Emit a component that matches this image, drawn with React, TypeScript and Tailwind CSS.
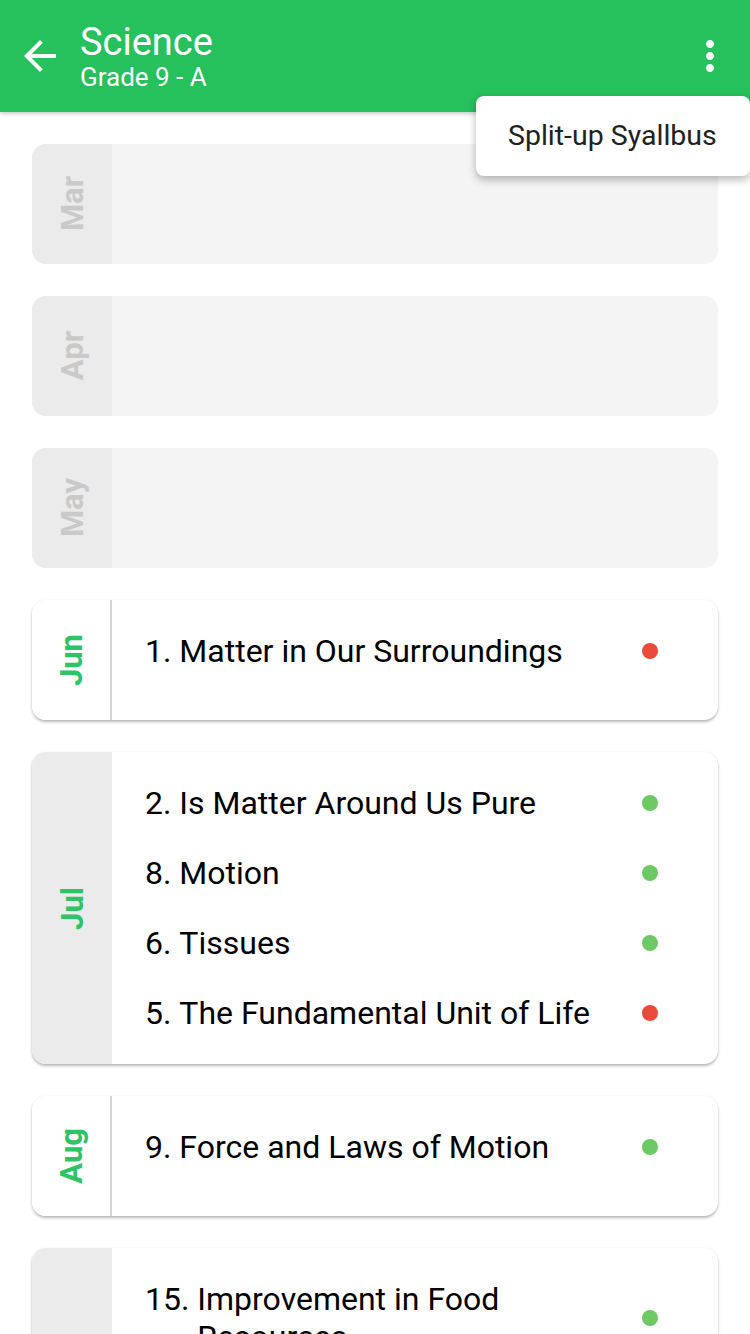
import React from "react";

type Item = { n: string; t: string; s: "g" | "r" };
type Month = { m: string; active: boolean; stripGray: boolean; items: Item[] };

const months: Month[] = [
  { m: "Mar", active: false, stripGray: true, items: [] },
  { m: "Apr", active: false, stripGray: true, items: [] },
  { m: "May", active: false, stripGray: true, items: [] },
  { m: "Jun", active: true, stripGray: false, items: [{ n: "1.", t: "Matter in Our Surroundings", s: "r" }] },
  {
    m: "Jul",
    active: true,
    stripGray: true,
    items: [
      { n: "2.", t: "Is Matter Around Us Pure", s: "g" },
      { n: "8.", t: "Motion", s: "g" },
      { n: "6.", t: "Tissues", s: "g" },
      { n: "5.", t: "The Fundamental Unit of Life", s: "r" },
    ],
  },
  { m: "Aug", active: true, stripGray: false, items: [{ n: "9.", t: "Force and Laws of Motion", s: "g" }] },
  {
    m: "Sep",
    active: true,
    stripGray: true,
    items: [
      { n: "15.", t: "Improvement in Food Resources", s: "g" },
      { n: "10.", t: "Gravitation", s: "g" },
      { n: "11.", t: "Work and Energy", s: "g" },
    ],
  },
];

function MonthCard({ mo }: { mo: Month }) {
  const empty = mo.items.length === 0;
  return (
    <div
      className={
        "flex min-h-[120px] rounded-[14px] overflow-hidden " +
        (empty ? "bg-[#f4f4f4]" : "bg-white shadow-[0_2px_3px_rgba(0,0,0,0.28),0_0_2px_rgba(0,0,0,0.06)]")
      }
    >
      <div
        className={
          "w-[80px] shrink-0 flex items-center justify-center " +
          (mo.stripGray ? "bg-[#ebebeb]" : "bg-white border-r-2 border-[#d4d4d4]")
        }
      >
        <span
          className={
            "[writing-mode:vertical-rl] rotate-180 text-[31px] leading-none font-bold " +
            (mo.active ? "text-[#2dc466]" : "text-[#c9c9c9]")
          }
        >
          {mo.m}
        </span>
      </div>
      {!empty && (
        <div className="flex-1 py-4 flex flex-col">
          {mo.items.map((it) => (
            <div key={it.t} className="flex items-center py-4 pl-[33px] pr-[60px] gap-6">
              <div className="flex-1 flex text-[32px] leading-[38px] text-black">
                <span className="shrink-0 whitespace-pre">{it.n + " "}</span>
                <span>{it.t}</span>
              </div>
              <div className={"w-4 h-4 rounded-full shrink-0 " + (it.s === "g" ? "bg-[#6cc964]" : "bg-[#ea4a3a]")} />
            </div>
          ))}
        </div>
      )}
    </div>
  );
}

export default function App() {
  return (
    <div className="w-[750px] h-[1334px] overflow-hidden relative bg-white font-['Roboto',sans-serif]">
      <header className="h-[112px] bg-[#26c05d] flex items-center shadow-[0_2px_4px_rgba(0,0,0,0.2)] relative z-10">
        <svg viewBox="0 0 24 24" className="w-12 h-12 ml-4 fill-white shrink-0">
          <path d="M20 11H7.83l5.59-5.59L12 4l-8 8 8 8 1.41-1.41L7.83 13H20v-2z" />
        </svg>
        <div className="ml-4 flex flex-col text-white pt-[2px]">
          <span className="text-[38px] leading-[40px]">Science</span>
          <span className="text-[26px] leading-[30px]">Grade 9 - A</span>
        </div>
        <svg viewBox="0 0 24 24" className="w-12 h-12 ml-auto mr-4 fill-white shrink-0">
          <path d="M12 8c1.1 0 2-.9 2-2s-.9-2-2-2-2 .9-2 2 .9 2 2 2zm0 2c-1.1 0-2 .9-2 2s.9 2 2 2 2-.9 2-2-.9-2-2-2zm0 6c-1.1 0-2 .9-2 2s.9 2 2 2 2-.9 2-2-.9-2-2-2z" />
        </svg>
      </header>

      <div className="absolute left-[476px] top-[96px] w-[274px] h-[80px] bg-white rounded-[8px] z-20 shadow-[0_4px_8px_rgba(0,0,0,0.28)] flex items-center pl-8">
        <span className="text-[28.5px] text-[#212121]">Split-up Syallbus</span>
      </div>

      <div className="px-8 pt-8 flex flex-col gap-8">
        {months.map((mo) => (
          <MonthCard key={mo.m} mo={mo} />
        ))}
      </div>
    </div>
  );
}
